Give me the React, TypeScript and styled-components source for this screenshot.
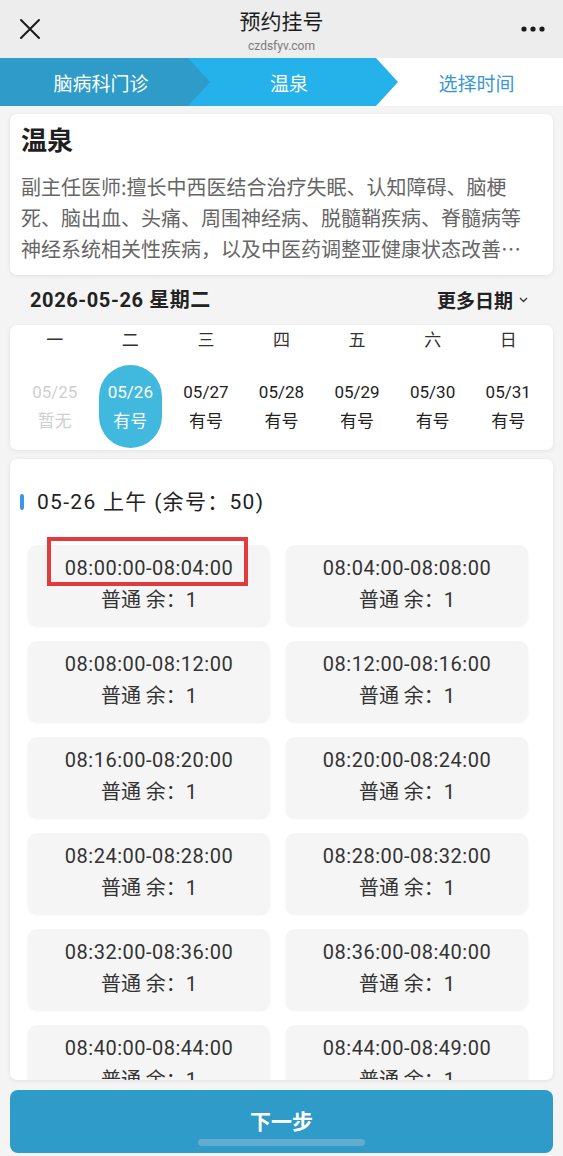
import styled, { createGlobalStyle } from "styled-components";

const GlobalStyle = createGlobalStyle`
	body {
		margin: 0;
		background: #f4f4f4;
		font-family: "Roboto", "Noto Sans CJK SC", sans-serif;
		color: #333;
	}
`;

const Page = styled.div`
	width: 563px;
	height: 1156px;
	display: flex;
	flex-direction: column;
	overflow: hidden;
	background: #f4f4f4;
`;

const TopBar = styled.div`
	height: 58px;
	background: #ededed;
	display: grid;
	grid-template-columns: 60px 1fr 60px;
	align-items: center;
`;

const IconButton = styled.div`
	display: flex;
	align-items: center;
	justify-content: center;
	height: 58px;
`;

const TitleBlock = styled.div`
	display: flex;
	flex-direction: column;
	align-items: center;
	padding-top: 2px;
`;

const Title = styled.div`
	font-size: 21px;
	line-height: 32px;
	color: #1c1c1c;
`;

const Domain = styled.div`
	font-size: 12px;
	line-height: 16px;
	color: #7a7a7a;
`;

const Steps = styled.div`
	height: 48px;
	display: flex;
	background: #fff;
`;

const Step = styled.div<{ $bg: string; $color: string; $w?: number; $z: number; $pad: string }>`
	position: relative;
	z-index: ${(p) => p.$z};
	height: 48px;
	${(p) => (p.$w ? `width: ${p.$w}px; flex: none;` : "flex: 1;")}
	background: ${(p) => p.$bg};
	color: ${(p) => p.$color};
	display: flex;
	align-items: center;
	justify-content: center;
	padding: ${(p) => p.$pad};
	box-sizing: border-box;
	font-size: 19px;
	font-family: "Noto Sans CJK SC", sans-serif;
	clip-path: ${(p) =>
		p.$w
			? `polygon(0 0, ${p.$w - 22}px 0, ${p.$w}px 50%, ${p.$w - 22}px 100%, 0 100%)`
			: "none"};
	& + & {
		margin-left: -22px;
	}
`;

const Content = styled.div`
	padding: 8px 10px 0;
	display: flex;
	flex-direction: column;
`;

const Card = styled.div`
	background: #fff;
	border-radius: 7px;
	box-shadow: 0 1px 4px rgba(0, 0, 0, 0.08);
`;

const DoctorCard = styled(Card)`
	padding: 8px 24px 11px 11px;
`;

const DoctorName = styled.div`
	font-size: 26px;
	line-height: 34px;
	font-weight: 700;
	color: #1f1f1f;
	font-family: "Noto Sans CJK SC", sans-serif;
	margin-bottom: 15px;
`;

const Intro = styled.div`
	font-size: 20px;
	line-height: 31px;
	color: #666;
	font-family: "Noto Sans CJK SC", sans-serif;
	display: -webkit-box;
	-webkit-line-clamp: 3;
	-webkit-box-orient: vertical;
	overflow: hidden;
`;

const DateRow = styled.div`
	height: 50px;
	display: flex;
	align-items: center;
	justify-content: space-between;
	padding: 0 25px 0 20px;
	font-weight: 700;
	font-size: 19px;
	line-height: 26px;
	color: #222;
`;

const CurrentDate = styled.span`
	font-size: 20px;
	letter-spacing: 0.6px;
`;

const MoreDates = styled.div`
	display: flex;
	align-items: center;
	gap: 6px;
	font-family: "Noto Sans CJK SC", sans-serif;
`;

const CalendarCard = styled(Card)`
	padding: 2px 7px 2px;
`;

const WeekGrid = styled.div`
	display: grid;
	grid-template-columns: repeat(7, 1fr);
`;

const WeekLabel = styled.div`
	text-align: center;
	font-size: 17px;
	line-height: 24px;
	color: #333;
	margin-bottom: 14px;
	font-family: "Noto Sans CJK SC", sans-serif;
`;

const DayCell = styled.div`
	display: flex;
	justify-content: center;
`;

const DayPill = styled.div<{ $active?: boolean; $disabled?: boolean }>`
	width: 63px;
	height: 83px;
	border-radius: 32px;
	display: flex;
	flex-direction: column;
	align-items: center;
	justify-content: center;
	font-size: 17px;
	line-height: 29px;
	background: ${(p) => (p.$active ? "#41b9df" : "transparent")};
	color: ${(p) => (p.$active ? "#fff" : p.$disabled ? "#cfcfcf" : "#222")};
`;

const SlotPanel = styled(Card)`
	margin-top: 9px;
	height: 621px;
	overflow: hidden;
	padding: 29px 25px 0 10px;
	box-sizing: border-box;
`;

const SectionTitle = styled.div`
	display: flex;
	align-items: center;
	gap: 13px;
	font-size: 21px;
	letter-spacing: 1.3px;
	line-height: 28px;
	color: #222;
	margin-bottom: 29px;
`;

const Marker = styled.span`
	width: 4px;
	height: 16px;
	border-radius: 2px;
	background: #3b98e6;
`;

const SlotGrid = styled.div`
	display: grid;
	grid-template-columns: repeat(2, 242px);
	gap: 16px;
	padding-left: 8px;
`;

const Slot = styled.div`
	position: relative;
	height: 80px;
	box-sizing: border-box;
	padding-top: 7px;
	background: #f5f5f5;
	border-radius: 9px;
	box-shadow: 0 2px 3px rgba(0, 0, 0, 0.06);
	text-align: center;
	font-size: 20px;
	line-height: 32px;
	color: #333;
`;

const SlotTime = styled.div`
	letter-spacing: 0.5px;
`;

const Highlight = styled.div`
	position: absolute;
	left: 19px;
	top: -8px;
	width: 201px;
	height: 49px;
	border: 4px solid #e23b3d;
	box-sizing: border-box;
`;

const NextButton = styled.div`
	position: relative;
	margin-top: 10px;
	height: 63px;
	border-radius: 8px;
	background: #2f9bc9;
	color: #fff;
	font-size: 21px;
	font-weight: 700;
	font-family: "Noto Sans CJK SC", sans-serif;
	display: flex;
	align-items: center;
	justify-content: center;
	padding-bottom: 3px;
	box-sizing: border-box;
`;

const HomeBar = styled.div`
	position: absolute;
	left: 188px;
	bottom: 7px;
	width: 167px;
	height: 7px;
	border-radius: 4px;
	background: rgba(190, 200, 215, 0.35);
`;

const days = [
	{ w: "一", d: "05/25", s: "暂无", disabled: true },
	{ w: "二", d: "05/26", s: "有号", active: true },
	{ w: "三", d: "05/27", s: "有号" },
	{ w: "四", d: "05/28", s: "有号" },
	{ w: "五", d: "05/29", s: "有号" },
	{ w: "六", d: "05/30", s: "有号" },
	{ w: "日", d: "05/31", s: "有号" },
];

const slots = [
	"08:00:00-08:04:00",
	"08:04:00-08:08:00",
	"08:08:00-08:12:00",
	"08:12:00-08:16:00",
	"08:16:00-08:20:00",
	"08:20:00-08:24:00",
	"08:24:00-08:28:00",
	"08:28:00-08:32:00",
	"08:32:00-08:36:00",
	"08:36:00-08:40:00",
	"08:40:00-08:44:00",
	"08:44:00-08:49:00",
];

const App = () => {
	return (
		<Page>
			<GlobalStyle />
			<TopBar>
				<IconButton>
					<svg width="22" height="22" viewBox="0 0 22 22">
						<path d="M2 2L20 20M20 2L2 20" stroke="#1a1a1a" strokeWidth="2" strokeLinecap="round" />
					</svg>
				</IconButton>
				<TitleBlock>
					<Title>预约挂号</Title>
					<Domain>czdsfyv.com</Domain>
				</TitleBlock>
				<IconButton>
					<svg width="24" height="6" viewBox="0 0 24 6">
						<circle cx="3" cy="3" r="2.6" fill="#1a1a1a" />
						<circle cx="12" cy="3" r="2.6" fill="#1a1a1a" />
						<circle cx="21" cy="3" r="2.6" fill="#1a1a1a" />
					</svg>
				</IconButton>
			</TopBar>

			<Steps>
				<Step $bg="#2e9bc9" $color="#fff" $w={210} $z={3} $pad="0 8px 0 0">
					脑病科门诊
				</Step>
				<Step $bg="#25b2ea" $color="#fff" $w={210} $z={2} $pad="0 8px 0 0">
					温泉
				</Step>
				<Step $bg="#fff" $color="#3a97d4" $z={1} $pad="0 0 0 14px">
					选择时间
				</Step>
			</Steps>

			<Content>
				<DoctorCard>
					<DoctorName>温泉</DoctorName>
					<Intro>
						副主任医师:擅长中西医结合治疗失眠、认知障碍、脑梗死、脑出血、头痛、周围神经病、脱髓鞘疾病、脊髓病等神经系统相关性疾病，以及中医药调整亚健康状态改善睡眠、头晕等症状。
					</Intro>
				</DoctorCard>

				<DateRow>
					<CurrentDate>2026-05-26 星期二</CurrentDate>
					<MoreDates>
						更多日期
						<svg width="9" height="6" viewBox="0 0 9 6">
							<path d="M1 1L4.5 4.5L8 1" stroke="#333" strokeWidth="1.3" fill="none" />
						</svg>
					</MoreDates>
				</DateRow>

				<CalendarCard>
					<WeekGrid>
						{days.map((day) => (
							<WeekLabel key={day.w}>{day.w}</WeekLabel>
						))}
						{days.map((day) => (
							<DayCell key={day.d}>
								<DayPill $active={day.active} $disabled={day.disabled}>
									<span>{day.d}</span>
									<span>{day.s}</span>
								</DayPill>
							</DayCell>
						))}
					</WeekGrid>
				</CalendarCard>

				<SlotPanel>
					<SectionTitle>
						<Marker />
						05-26 上午 (余号：50)
					</SectionTitle>
					<SlotGrid>
						{slots.map((t, i) => (
							<Slot key={t}>
								{i === 0 && <Highlight />}
								<SlotTime>{t}</SlotTime>
								<div>普通 余：1</div>
							</Slot>
						))}
					</SlotGrid>
				</SlotPanel>

				<NextButton>
					下一步
					<HomeBar />
				</NextButton>
			</Content>
		</Page>
	);
};

export default App;
